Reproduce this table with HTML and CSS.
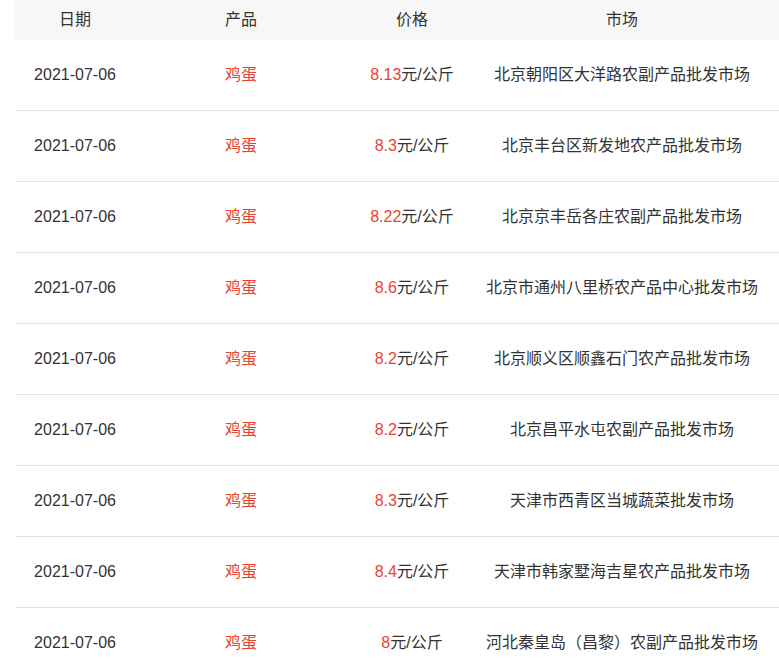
FILE: index.html
```html
<!DOCTYPE html>
<html lang="zh-CN">
<head>
<meta charset="utf-8">
<title>鸡蛋价格</title>
<link rel="stylesheet" href="styles.css">
</head>
<body>
<div class="wrap">
<table class="price-table">
  <colgroup>
    <col class="c-date"><col class="c-prod"><col class="c-price"><col class="c-market">
  </colgroup>
  <thead>
    <tr><th>日期</th><th>产品</th><th>价格</th><th class="market">市场</th></tr>
  </thead>
  <tbody>
    <tr><td>2021-07-06</td><td class="prod">鸡蛋</td><td><span class="num">8.13</span>元/公斤</td><td class="market">北京朝阳区大洋路农副产品批发市场</td></tr>
    <tr><td>2021-07-06</td><td class="prod">鸡蛋</td><td><span class="num">8.3</span>元/公斤</td><td class="market">北京丰台区新发地农产品批发市场</td></tr>
    <tr><td>2021-07-06</td><td class="prod">鸡蛋</td><td><span class="num">8.22</span>元/公斤</td><td class="market">北京京丰岳各庄农副产品批发市场</td></tr>
    <tr><td>2021-07-06</td><td class="prod">鸡蛋</td><td><span class="num">8.6</span>元/公斤</td><td class="market">北京市通州八里桥农产品中心批发市场</td></tr>
    <tr><td>2021-07-06</td><td class="prod">鸡蛋</td><td><span class="num">8.2</span>元/公斤</td><td class="market">北京顺义区顺鑫石门农产品批发市场</td></tr>
    <tr><td>2021-07-06</td><td class="prod">鸡蛋</td><td><span class="num">8.2</span>元/公斤</td><td class="market">北京昌平水屯农副产品批发市场</td></tr>
    <tr><td>2021-07-06</td><td class="prod">鸡蛋</td><td><span class="num">8.3</span>元/公斤</td><td class="market">天津市西青区当城蔬菜批发市场</td></tr>
    <tr><td>2021-07-06</td><td class="prod">鸡蛋</td><td><span class="num">8.4</span>元/公斤</td><td class="market">天津市韩家墅海吉星农产品批发市场</td></tr>
    <tr><td>2021-07-06</td><td class="prod">鸡蛋</td><td><span class="num">8</span>元/公斤</td><td class="market">河北秦皇岛（昌黎）农副产品批发市场</td></tr>
  </tbody>
</table>
</div>
</body>
</html>
```
FILE: styles.css
```css
html, body {
  margin: 0;
  padding: 0;
  background: #fff;
}
body {
  font-family: "Liberation Sans", Arial, "Noto Sans CJK SC", sans-serif;
  font-size: 16px;
  color: #333;
  overflow: hidden;
}
.wrap {
  padding-left: 15px;
}
.price-table {
  width: 764px;
  table-layout: fixed;
  border-collapse: collapse;
  border-spacing: 0;
}
.c-date { width: 120px; }
.c-prod { width: 212px; }
.c-price { width: 130px; }
.c-market { width: 302px; }
.price-table th {
  height: 40px;
  padding: 0;
  background: #f7f7f7;
  font-weight: normal;
  color: #333;
  text-align: center;
  vertical-align: middle;
  line-height: 20px;
}
.price-table td {
  height: 70px;
  padding: 0;
  text-align: center;
  vertical-align: middle;
  line-height: 20px;
  border-bottom: 1px solid #e3e3e3;
  white-space: nowrap;
}
.price-table .market {
  padding-right: 12px;
}
.prod, .num {
  color: #e8432f;
}
```
